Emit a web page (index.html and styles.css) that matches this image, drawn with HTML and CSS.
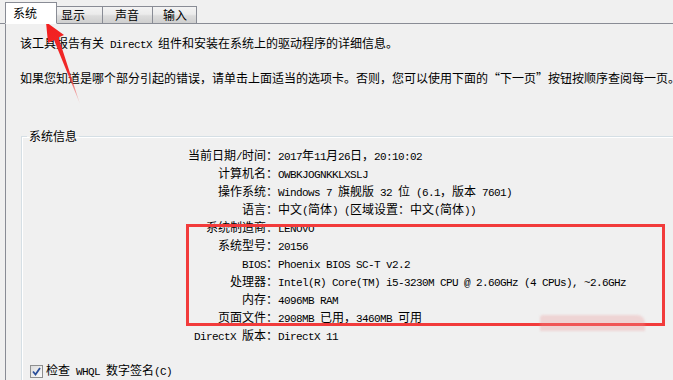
FILE: index.html
```html
<!DOCTYPE html>
<html lang="zh-CN">
<head>
<meta charset="utf-8">
<title>DirectX 诊断工具</title>
<link rel="stylesheet" href="styles.css">
</head>
<body>
<div class="window">
  <div class="tabs">
    <div class="tab active">系统</div>
    <div class="tab">显示</div>
    <div class="tab">声音</div>
    <div class="tab">输入</div>
  </div>
  <div class="panel">
    <p class="intro1">该工具报告有关<span class="m"> DirectX </span>组件和安装在系统上的驱动程序的详细信息。</p>
    <p class="intro2">如果您知道是哪个部分引起的错误，请单击上面适当的选项卡。否则，您可以使用下面的<span class="ql">“</span>下一页<span class="qr">”</span>按钮按顺序查阅每一页。</p>
    <fieldset class="group">
      <legend>系统信息</legend>
      <div class="rows">
        <div class="lbl">当前日期<span class="m">/</span>时间：</div><div class="val"><span class="m">2017</span>年<span class="m">11</span>月<span class="m">26</span>日，<span class="m">20:10:02</span></div>
        <div class="lbl">计算机名：</div><div class="val"><span class="m">OWBKJOGNKKLXSLJ</span></div>
        <div class="lbl">操作系统：</div><div class="val"><span class="m">Windows 7 </span>旗舰版<span class="m"> 32 </span>位<span class="m"> (6.1</span>，版本<span class="m"> 7601)</span></div>
        <div class="lbl">语言：</div><div class="val">中文<span class="m">(</span>简体<span class="m">) (</span>区域设置：中文<span class="m">(</span>简体<span class="m">))</span></div>
        <div class="lbl">系统制造商：</div><div class="val"><span class="m">LENOVO</span></div>
        <div class="lbl">系统型号：</div><div class="val"><span class="m">20156</span></div>
        <div class="lbl"><span class="m">BIOS</span>：</div><div class="val"><span class="m">Phoenix BIOS SC-T v2.2</span></div>
        <div class="lbl">处理器：</div><div class="val"><span class="m">Intel(R) Core(TM) i5-3230M CPU @ 2.60GHz (4 CPUs), ~2.6GHz</span></div>
        <div class="lbl">内存：</div><div class="val"><span class="m">4096MB RAM</span></div>
        <div class="lbl">页面文件：</div><div class="val"><span class="m">2908MB </span>已用，<span class="m">3460MB </span>可用</div>
        <div class="lbl"><span class="m">DirectX </span>版本：</div><div class="val"><span class="m">DirectX 11</span></div>
      </div>
      <label class="check"><span class="box"><svg width="9" height="9" viewBox="0 0 9 9"><path d="M1 4.5 L3.5 7.5 L8 1" fill="none" stroke="#2a4f9a" stroke-width="1.8"/></svg></span><span class="ctext">检查<span class="m"> WHQL </span>数字签名<span class="m">(C)</span></span></label>
    </fieldset>
  </div>
  <div class="highlight"></div>
  <div class="watermark"></div>
  <svg class="arrow" width="100" height="110" viewBox="0 0 100 110">
    <defs>
      <linearGradient id="ag" x1="46" y1="22" x2="80" y2="105" gradientUnits="userSpaceOnUse">
        <stop offset="0" stop-color="#f21f1f"/>
        <stop offset="0.6" stop-color="#f02a2a"/>
        <stop offset="1" stop-color="#f03a3a" stop-opacity="0.1"/>
      </linearGradient>
    </defs>
    <polygon points="46,22 64,35 58.5,37.5 80,104 54,40 48,43" fill="url(#ag)"/>
  </svg>
</div>
</body>
</html>
```

FILE: styles.css
```css
html, body {
  margin: 0;
  padding: 0;
  background: #f0f0f0;
}
body {
  width: 673px;
  height: 380px;
  overflow: hidden;
  font-family: "Noto Sans CJK SC", "DejaVu Sans", sans-serif;
  font-size: 12px;
  color: #000;
}
.window {
  position: relative;
  width: 673px;
  height: 380px;
  overflow: hidden;
}
.m {
  font-family: "Liberation Mono", "DejaVu Sans Mono", monospace;
  font-size: 11px;
  letter-spacing: -0.6px;
  white-space: pre;
}
.ql, .qr {
  display: inline-block;
  width: 12px;
}
.ql { text-align: right; }
.qr { text-align: left; }
.tabs {
  display: flex;
  align-items: flex-end;
  height: 23px;
  padding-left: 5px;
  border-bottom: 1px solid #898c95;
}
.tab {
  box-sizing: border-box;
  height: 18px;
  margin-bottom: -1px;
  line-height: 16px;
  padding: 0 6px;
  border: 1px solid #898c95;
  border-left: none;
  border-bottom: 1px solid #898c95;
  background: linear-gradient(#f3f3f3, #ebebeb 45%, #dcdcdc 55%, #cfcfcf);
}
.tab:nth-child(2) { width: 46px; padding-left: 4px; }
.tab:nth-child(3) { width: 50px; padding-left: 12px; }
.tab:nth-child(4) { width: 44px; padding-left: 10px; }
.tab.active {
  width: 52px;
  height: 22px;
  line-height: 20px;
  padding-left: 7px;
  border-left: 1px solid #898c95;
  border-bottom-color: #fff;
  background: #fff;
  position: relative;
  z-index: 1;
}
.panel {
  margin-left: 5px;
  border-left: 1px solid #898c95;
  padding-left: 14px;
  height: 356px;
}
.panel p {
  margin: 0;
  line-height: 18px;
  white-space: nowrap;
}
.intro1 { padding-top: 10px; }
.intro2 { margin-top: 15px !important; }
.group {
  margin: 42px 0 0 1px;
  padding: 3px 0 0 0;
  border: 1px solid #d5dfe5;
  border-right: none;
  border-bottom: none;
  box-shadow: inset 1px 1px 0 #fff;
  min-width: 0;
  width: 700px;
}
.group legend {
  margin-left: 5px;
  padding: 0 2px;
  line-height: 14px;
}
.rows {
  display: grid;
  grid-template-columns: 256px 1fr;
  grid-auto-rows: 18px;
  line-height: 18px;
  white-space: nowrap;
}
.lbl {
  text-align: right;
}
.check {
  display: flex;
  align-items: center;
  margin-top: 17px;
  padding-left: 8px;
  line-height: 18px;
}
.box {
  box-sizing: border-box;
  width: 13px;
  height: 13px;
  margin-right: 3px;
  border: 1px solid #8e8f8f;
  background: linear-gradient(135deg, #dcdcdc, #fbfbfb);
  display: flex;
  align-items: center;
  justify-content: center;
}
.highlight {
  position: absolute;
  left: 186px;
  top: 224px;
  width: 479px;
  height: 102px;
  box-sizing: border-box;
  border: 3px solid #f23b3b;
}
.watermark {
  position: absolute;
  left: 540px;
  top: 315px;
  width: 105px;
  height: 16px;
  background: rgba(236, 150, 150, 0.3);
  border-radius: 3px 8px 0 0;
  filter: blur(1px);
}
.arrow {
  position: absolute;
  left: 0;
  top: 0;
}
```
